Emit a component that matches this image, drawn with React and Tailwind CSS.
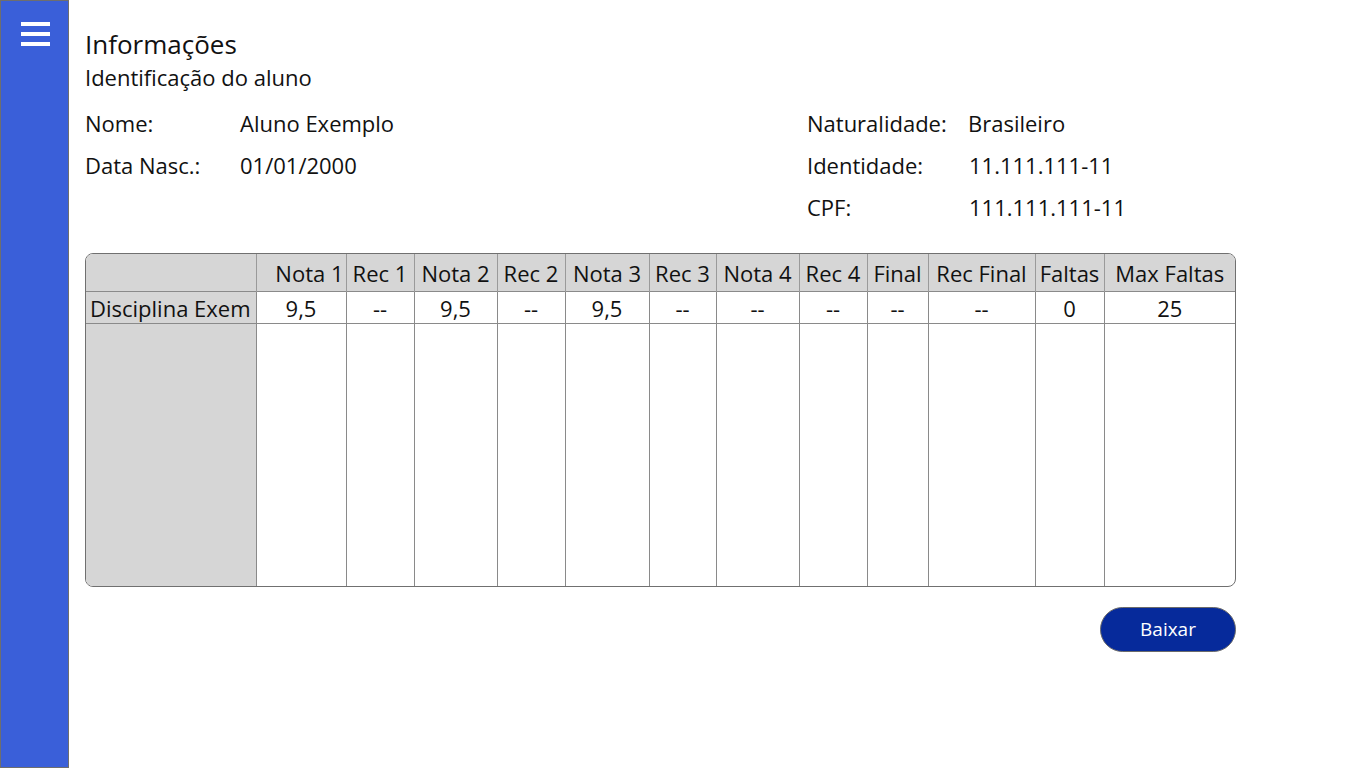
const COLS = [
  { label: '', w: 170, align: 'text-left' },
  { label: 'Nota 1', w: 90, align: 'text-right pr-[2px]' },
  { label: 'Rec 1', w: 68, align: 'text-center' },
  { label: 'Nota 2', w: 83, align: 'text-center' },
  { label: 'Rec 2', w: 68, align: 'text-center' },
  { label: 'Nota 3', w: 84, align: 'text-center' },
  { label: 'Rec 3', w: 67, align: 'text-center' },
  { label: 'Nota 4', w: 83, align: 'text-center' },
  { label: 'Rec 4', w: 68, align: 'text-center' },
  { label: 'Final', w: 61, align: 'text-center' },
  { label: 'Rec Final', w: 107, align: 'text-center' },
  { label: 'Faltas', w: 69, align: 'text-center' },
  { label: 'Max Faltas', w: 131, align: 'text-center' },
];

// first cell is cut to what fits, like the original grid
const ROW = ['Disciplina Exem', '9,5', '--', '9,5', '--', '9,5', '--', '--', '--', '--', '--', '0', '25'];

function Field({ label, value, labelW }) {
  return (
    <div className="flex h-[42px] items-center">
      <span className={`${labelW} shrink-0`}>{label}</span>
      <span>{value}</span>
    </div>
  );
}

export default function App() {
  return (
    <div
      className="flex min-h-screen bg-white text-[#111]"
      style={{ fontFamily: '"Open Sans", "Noto Sans", sans-serif' }}
    >
      <aside className="w-[69px] shrink-0 h-screen border border-[#6e6e6e] bg-[#3a5fd9] pt-[21px]">
        <div className="ml-[20px] flex w-[29px] flex-col gap-[6px]">
          <span className="h-[4px] bg-white" />
          <span className="h-[4px] bg-white" />
          <span className="h-[4px] bg-white" />
        </div>
      </aside>

      <main className="flex-1 pl-[16px] pt-[28px]">
        <h1 className="text-[26px] leading-[32px]">Informações</h1>
        <h2 className="text-[22px] leading-[28px] mt-[3px]">Identificação do aluno</h2>

        <div className="mt-[11px] flex text-[22px]">
          <div className="w-[722px]">
            <Field label="Nome:" value="Aluno Exemplo" labelW="w-[155px]" />
            <Field label="Data Nasc.:" value="01/01/2000" labelW="w-[155px]" />
          </div>
          <div>
            <Field label="Naturalidade:" value="Brasileiro" labelW="w-[161px]" />
            <Field label="Identidade:" value="11.111.111-11" labelW="w-[162px]" />
            <Field label="CPF:" value="111.111.111-11" labelW="w-[162px]" />
          </div>
        </div>

        <div className="mt-[25px] w-[1151px] overflow-hidden rounded-[8px] border border-[#707070]">
          <table className="w-full table-fixed border-collapse text-[22px] leading-[28px]">
            <colgroup>
              {COLS.map((c, i) => (
                <col key={i} style={{ width: c.w }} />
              ))}
            </colgroup>
            <thead>
              <tr className="h-[37px] bg-[#d6d6d6]">
                {COLS.map((c, i) => (
                  <th
                    key={i}
                    className={`border-l border-[#9a9a9a] first:border-l-0 font-normal whitespace-nowrap overflow-hidden pt-[2px] ${c.align}`}
                  >
                    {c.label}
                  </th>
                ))}
              </tr>
            </thead>
            <tbody>
              <tr className="h-[32px]">
                {ROW.map((v, i) => (
                  <td
                    key={i}
                    className={`border-l border-t border-[#8a8a8a] first:border-l-0 whitespace-nowrap overflow-hidden pt-[2px] ${
                      i === 0 ? 'bg-[#d6d6d6] pl-[4px] text-left' : 'text-center'
                    }`}
                  >
                    {v}
                  </td>
                ))}
              </tr>
              <tr className="h-[263px]">
                {COLS.map((c, i) => (
                  <td
                    key={i}
                    className={`border-l border-t border-[#8a8a8a] first:border-l-0 ${i === 0 ? 'bg-[#d6d6d6]' : ''}`}
                  />
                ))}
              </tr>
            </tbody>
          </table>
        </div>

        <div className="mt-[20px] flex w-[1151px] justify-end">
          <button className="h-[45px] w-[136px] rounded-full border border-[#6b6b6b] bg-[#062a9b] text-[19px] text-white">
            Baixar
          </button>
        </div>
      </main>
    </div>
  );
}
